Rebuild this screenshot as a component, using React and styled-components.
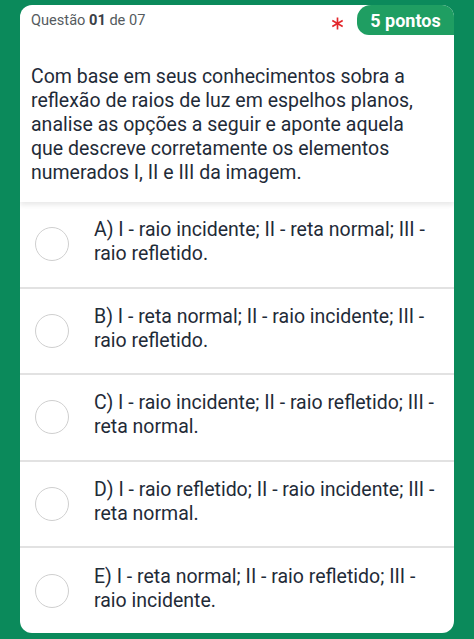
import React from 'react';
import styled, { createGlobalStyle } from 'styled-components';

const GlobalStyle = createGlobalStyle`
  html, body {
    margin: 0;
    padding: 0;
    background: #0b8a5b;
    font-family: Roboto, "Noto Sans", Arial, sans-serif;
  }
`;

const Page = styled.div`
  width: 474px;
  height: 639px;
  padding: 5px 20px 6px;
  box-sizing: border-box;
`;

const Card = styled.div`
  background: #fff;
  border-radius: 12px;
  overflow: hidden;
  height: 628px;
  display: flex;
  flex-direction: column;
`;

const Head = styled.div`
  height: 197px;
  flex-shrink: 0;
  position: relative;
  box-shadow: 0 3px 5px rgba(0, 0, 0, 0.09);
  z-index: 1;
`;

const TopRow = styled.div`
  display: flex;
  align-items: center;
  height: 30px;
`;

const Counter = styled.span`
  flex: 1;
  padding-left: 11px;
  font-size: 14.6px;
  color: #555b60;
  b {
    font-weight: 700;
    color: #3a4046;
  }
`;

const Required = styled.svg`
  width: 13px;
  height: 13px;
  margin: 6px 13px 0 0;
  stroke: #e3262b;
  stroke-width: 1.8;
  stroke-linecap: butt;
`;

const Points = styled.span`
  height: 30px;
  width: 97px;
  background: #1f9e62;
  color: #fff;
  font-weight: 700;
  font-size: 18px;
  display: flex;
  align-items: center;
  justify-content: center;
  border-radius: 14px 0 0 12px;
`;

const Statement = styled.p`
  margin: 30px 0 0;
  padding: 0 14px 0 11px;
  font-size: 19.5px;
  line-height: 24px;
  color: #1f2b38;
`;

const Option = styled.label`
  flex: 1;
  display: flex;
  align-items: center;
  border-top: ${props => (props.first ? 'none' : '2px solid #e2e2e2')};
  padding: 0 8px 0 15px;
  gap: 25px;
`;

const Radio = styled.span`
  width: 32px;
  height: 32px;
  flex-shrink: 0;
  border: 1.5px solid #cfcfcf;
  border-radius: 50%;
`;

const OptionText = styled.span`
  font-size: 19.5px;
  line-height: 24px;
  color: #1f2b38;
  margin-top: -4px;
`;

const options = [
  'A) I - raio incidente; II - reta normal; III - raio refletido.',
  'B) I - reta normal; II - raio incidente; III - raio refletido.',
  'C) I - raio incidente; II - raio refletido; III - reta normal.',
  'D) I - raio refletido; II - raio incidente; III - reta normal.',
  'E) I - reta normal; II - raio refletido; III - raio incidente.',
];

const App = () => (
  <>
    <GlobalStyle />
    <Page>
      <Card>
        <Head>
          <TopRow>
            <Counter>
              Questão <b>01</b> de 07
            </Counter>
            <Required viewBox="0 0 14 14">
              <path d="M7 0.5V13.5M1.4 3.75L12.6 10.25M1.4 10.25L12.6 3.75" />
            </Required>
            <Points>5 pontos</Points>
          </TopRow>
          <Statement>
            Com base em seus conhecimentos sobra a reflexão de raios de luz em
            espelhos planos, analise as opções a seguir e aponte aquela que
            descreve corretamente os elementos numerados I, II e III da imagem.
          </Statement>
        </Head>
        {options.map((text, i) => (
          <Option key={text} first={i === 0}>
            <Radio />
            <OptionText>{text}</OptionText>
          </Option>
        ))}
      </Card>
    </Page>
  </>
);

export default App;
